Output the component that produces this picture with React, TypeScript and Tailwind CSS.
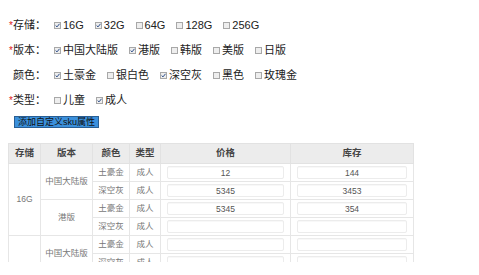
import React from 'react';

type Opt = { label: string; checked?: boolean };

const groups: { label: string; required: boolean; options: Opt[] }[] = [
  {
    label: '存储',
    required: true,
    options: [
      { label: '16G', checked: true },
      { label: '32G', checked: true },
      { label: '64G' },
      { label: '128G' },
      { label: '256G' },
    ],
  },
  {
    label: '版本',
    required: true,
    options: [
      { label: '中国大陆版', checked: true },
      { label: '港版', checked: true },
      { label: '韩版' },
      { label: '美版' },
      { label: '日版' },
    ],
  },
  {
    label: '颜色',
    required: false,
    options: [
      { label: '土豪金', checked: true },
      { label: '银白色' },
      { label: '深空灰', checked: true },
      { label: '黑色' },
      { label: '玫瑰金' },
    ],
  },
  {
    label: '类型',
    required: true,
    options: [{ label: '儿童' }, { label: '成人', checked: true }],
  },
];

function Box({ checked }: { checked?: boolean }) {
  return (
    <span className="w-[7px] h-[7px] border border-[#a8a8a8] bg-[#eeeeee] flex items-center justify-center mr-[2px]">
      {checked && (
        <svg width="5" height="5" viewBox="0 0 5 5">
          <path d="M0.6 2.5 L2 3.9 L4.5 0.8" stroke="#2e4f8a" strokeWidth="1" fill="none" />
        </svg>
      )}
    </span>
  );
}

function Row({ label, required, options }: { label: string; required: boolean; options: Opt[] }) {
  return (
    <div className="flex items-center h-[25px]">
      <div className="w-[45px] flex items-center">
        <span className="w-[4px] text-[#e02020] text-[10px] leading-none">{required ? '*' : ''}</span>
        <span>{label}：</span>
      </div>
      {options.map((o) => (
        <label key={o.label} className="flex items-center mr-[11px]">
          <Box checked={o.checked} />
          <span>{o.label}</span>
        </label>
      ))}
    </div>
  );
}

const rows = [
  { storage: '16G', ver: '中国大陆版', color: '土豪金', type: '成人', price: '12', stock: '144' },
  { storage: '16G', ver: '中国大陆版', color: '深空灰', type: '成人', price: '5345', stock: '3453' },
  { storage: '16G', ver: '港版', color: '土豪金', type: '成人', price: '5345', stock: '354' },
  { storage: '16G', ver: '港版', color: '深空灰', type: '成人', price: '', stock: '' },
  { storage: '32G', ver: '中国大陆版', color: '土豪金', type: '成人', price: '', stock: '' },
  { storage: '32G', ver: '中国大陆版', color: '深空灰', type: '成人', price: '', stock: '' },
  { storage: '32G', ver: '港版', color: '土豪金', type: '成人', price: '', stock: '' },
  { storage: '32G', ver: '港版', color: '深空灰', type: '成人', price: '', stock: '' },
];

function Cell({ value }: { value: string }) {
  return (
    <td className="border border-[#e6e6e6] px-[6px] py-[2px]">
      <div className="h-[13px] border border-[#ececec] rounded-[2px] shadow-[inset_0_1px_1px_rgba(0,0,0,0.03)] text-center leading-[12px] text-[#555]">
        {value}
      </div>
    </td>
  );
}

export default function App() {
  return (
    <div
      className="w-[479px] h-[275px] bg-white text-[11px] text-[#222] pl-[9px] pt-[13px] overflow-hidden"
      style={{ fontFamily: '"Liberation Sans", "Noto Sans CJK SC", sans-serif' }}
    >
      {groups.map((g) => (
        <Row key={g.label} {...g} />
      ))}
      <button className="ml-[5px] mt-[3px] w-[85px] h-[12px] bg-[#3b90dc] border border-[#2a5f94] text-[9px] leading-[10px] text-[#111] flex items-center justify-center">
        添加自定义sku属性
      </button>
      <div className="mt-[15px] -ml-[1px] h-[119px] overflow-hidden">
        <table className="border-collapse table-fixed w-[405px] text-[8.5px] text-[#777]">
          <colgroup>
            <col className="w-[32px]" />
            <col className="w-[52px]" />
            <col className="w-[37px]" />
            <col className="w-[31px]" />
            <col className="w-[130px]" />
            <col className="w-[123px]" />
          </colgroup>
          <thead>
            <tr className="bg-[#ececec] h-[20px] text-[#444] text-[9.5px]">
              {['存储', '版本', '颜色', '类型', '价格', '库存'].map((h) => (
                <th key={h} className="border border-[#e2e2e2] font-bold">
                  {h}
                </th>
              ))}
            </tr>
          </thead>
          <tbody>
            {rows.map((r, i) => (
              <tr key={i} className="h-[18px] text-center">
                {i % 4 === 0 && (
                  <td rowSpan={4} className="border border-[#e6e6e6]">
                    {r.storage}
                  </td>
                )}
                {i % 2 === 0 && (
                  <td rowSpan={2} className="border border-[#e6e6e6]">
                    {r.ver}
                  </td>
                )}
                <td className="border border-[#e6e6e6]">{r.color}</td>
                <td className="border border-[#e6e6e6]">{r.type}</td>
                <Cell value={r.price} />
                <Cell value={r.stock} />
              </tr>
            ))}
          </tbody>
        </table>
      </div>
    </div>
  );
}
